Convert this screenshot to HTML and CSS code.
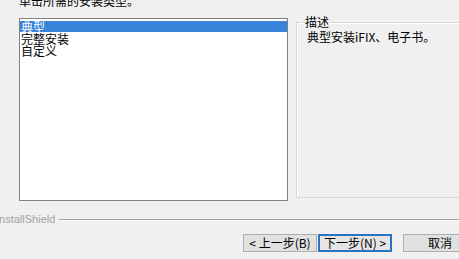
FILE: index.html
```html
<!DOCTYPE html>
<html>
<head>
<meta charset="utf-8">
<link rel="stylesheet" href="styles.css">
</head>
<body>
<div class="dialog">
  <div class="prompt">单击所需的安装类型。</div>
  <div class="main">
    <div class="listbox">
      <div class="item selected">典型</div>
      <div class="item">完整安装</div>
      <div class="item">自定义</div>
    </div>
    <fieldset class="group">
      <legend class="legend">描述</legend>
      <div class="desc">典型安装iFIX、电子书。</div>
    </fieldset>
  </div>
  <div class="separator">
    <span class="brand">InstallShield</span>
    <span class="rule"></span>
  </div>
  <div class="buttons">
    <button class="btn">&lt; 上一步(B)</button>
    <button class="btn focused">下一步(N) &gt;</button>
    <button class="btn cancel">取消</button>
  </div>
</div>
</body>
</html>
```
FILE: styles.css
```css
html, body {
  margin: 0;
  padding: 0;
  background: #f0f0f0;
  width: 459px;
  height: 259px;
  overflow: hidden;
}
.dialog {
  font-family: "Noto Sans CJK SC", "Liberation Sans", sans-serif;
  font-size: 12px;
  color: #000;
  display: flex;
  flex-direction: column;
}
.prompt {
  margin-top: -6px;
  padding-left: 19px;
  line-height: 13px;
  height: 13px;
}
.main {
  display: flex;
  margin-top: 11px;
  padding-left: 19px;
  gap: 8px;
}
.listbox {
  flex: none;
  width: 267px;
  height: 179px;
  border: 1px solid #828282;
  background: #fff;
  padding-top: 2px;
  box-sizing: content-box;
}
.item {
  line-height: 12px;
  height: 12px;
  padding-left: 1px;
  white-space: nowrap;
}
.item.selected {
  background: #3a83db;
  color: #fff;
  height: 11px;
  line-height: 11px;
  margin-bottom: 1px;
}
.group {
  flex: none;
  margin: 0;
  margin-top: -2px;
  padding: 0 0 0 10px;
  width: 180px;
  height: 182px;
  border: 1px solid #d9d9d9;
  box-shadow: inset 1px 1px 0 #fff;
  box-sizing: border-box;
  min-width: 0;
}
.legend {
  padding: 0;
  margin-left: -2px;
  line-height: 12px;
  height: 12px;
}
.desc {
  margin-top: 3px;
  line-height: 12px;
  white-space: nowrap;
}
.separator {
  display: flex;
  align-items: center;
  margin-top: 11px;
  height: 14px;
}
.brand {
  font-family: "Liberation Sans", sans-serif;
  font-size: 11px;
  color: #a0a0a0;
  margin-left: -4px;
  white-space: nowrap;
}
.rule {
  flex: 1;
  height: 0;
  border-top: 1px solid #a0a0a0;
  border-bottom: 1px solid #fff;
  margin-left: 4px;
  margin-top: 1px;
}
.buttons {
  display: flex;
  margin-top: 8px;
  padding-left: 243px;
}
.btn {
  font-family: "Noto Sans CJK SC", "Liberation Sans", sans-serif;
  font-size: 12px;
  height: 18px;
  width: 74px;
  padding: 0;
  margin: 0;
  line-height: 14px;
  background: #e1e1e1;
  border: 1px solid #adadad;
  color: #000;
  white-space: nowrap;
  flex: none;
}
.btn.focused {
  border: 2px solid #2a73c4;
  background: #e5e5e5;
  margin-left: 1px;
}
.btn.cancel {
  margin-left: 11px;
}
```
